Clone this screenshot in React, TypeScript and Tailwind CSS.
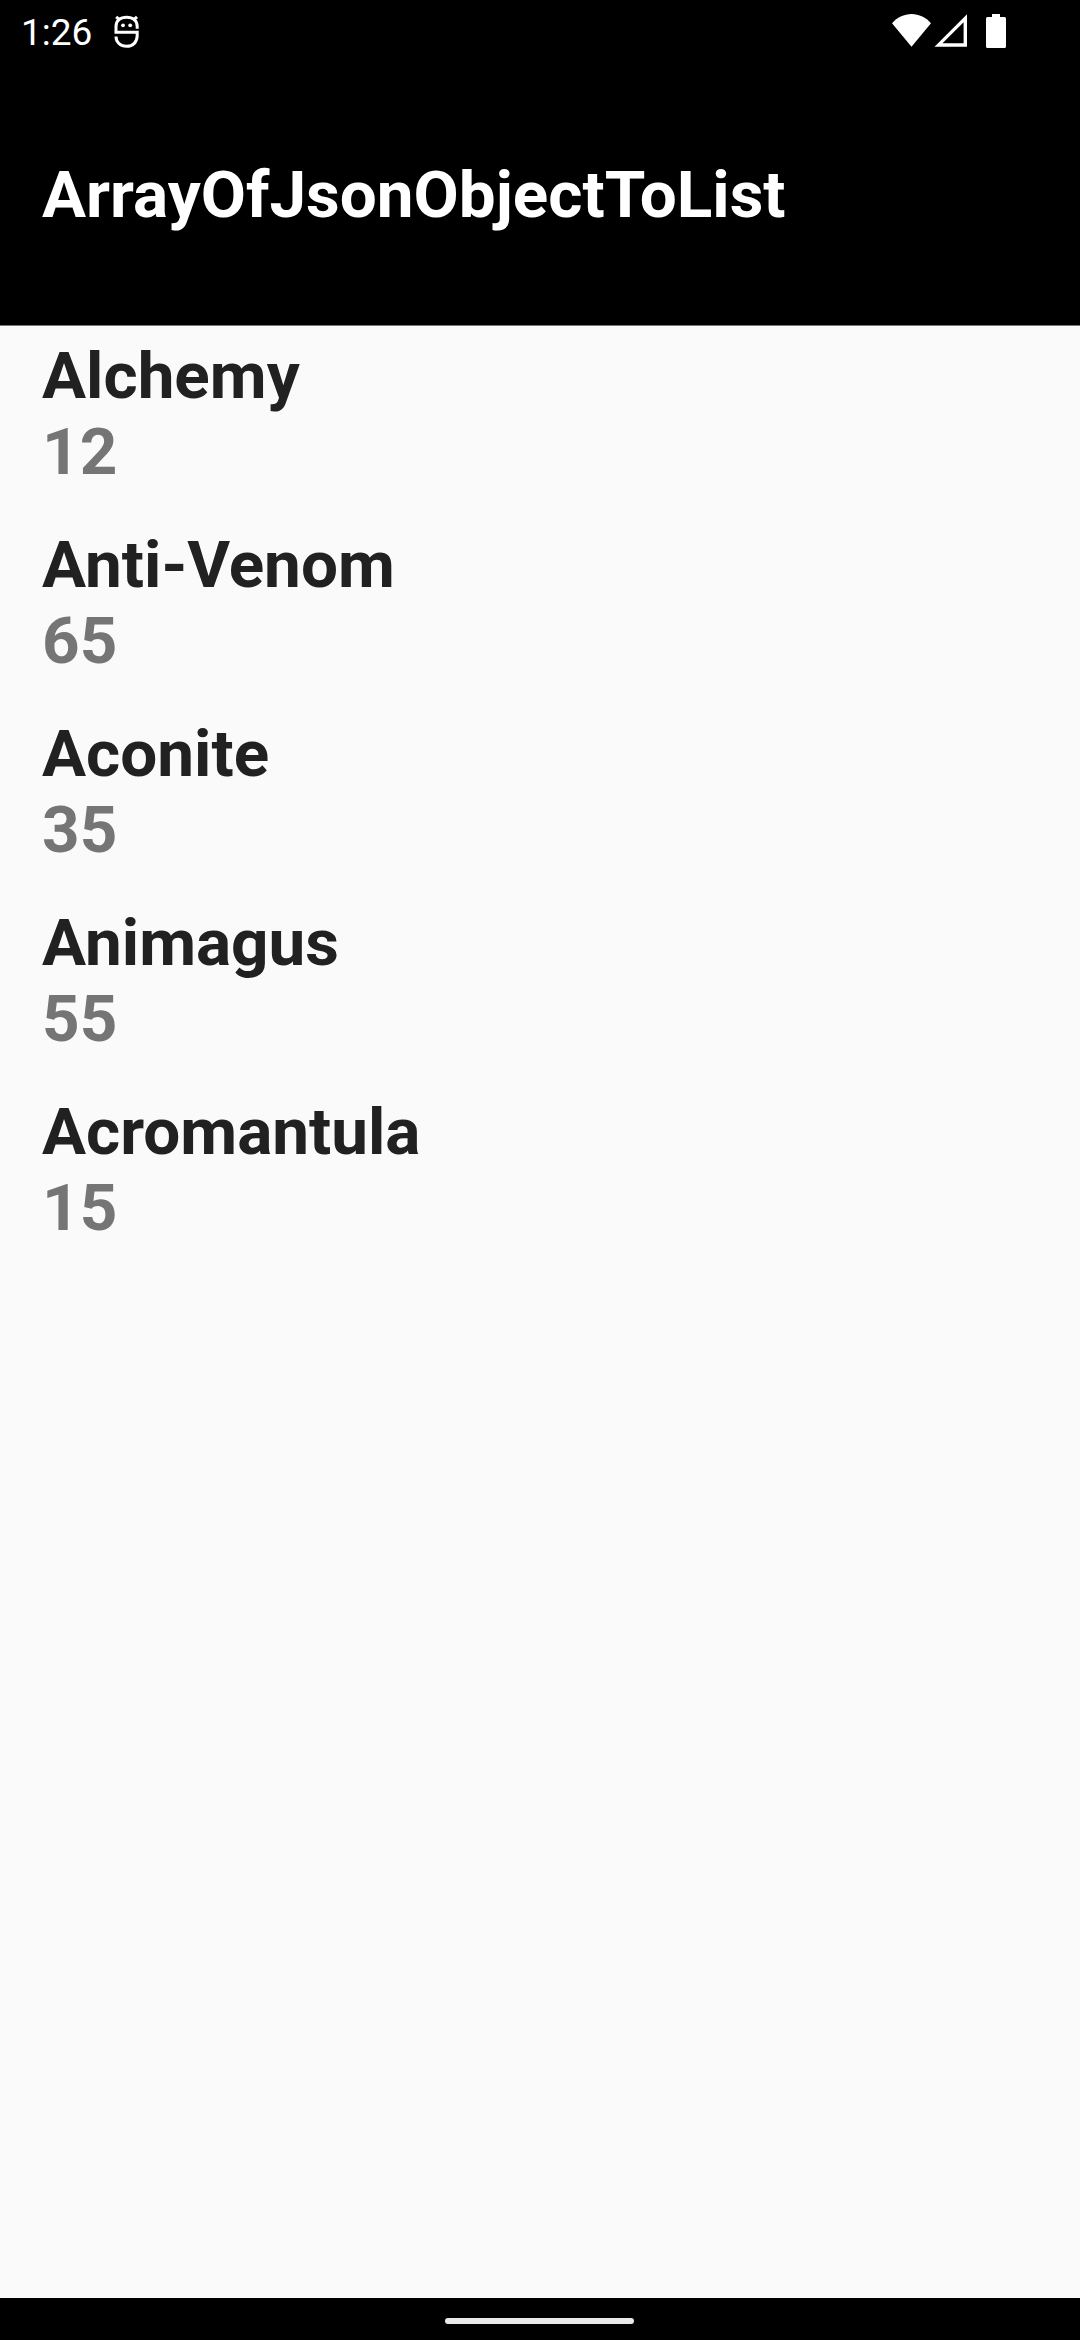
const items = [
  { name: "Alchemy", count: 12 },
  { name: "Anti-Venom", count: 65 },
  { name: "Aconite", count: 35 },
  { name: "Animagus", count: 55 },
  { name: "Acromantula", count: 15 },
];

function DebugIcon() {
  return (
    <svg className="ml-[21px] h-[36px] w-[27px]" viewBox="0 0 27 36" fill="none" stroke="white" strokeWidth="3">
      <path d="M24.2 15.8V13.500C24.2 7.500 20 4.300 13.600 4.300S3 7.500 3 13.500V19.200H24.200V22.500C24.200 29 20 33.300 13.600 33.300S3 29 3 23.500" />
      <path d="M3.200 3.800l4 3.600M24 3.800l-4 3.600" />
      <circle cx="10" cy="12.3" r="1.9" fill="white" stroke="none" />
      <circle cx="17.2" cy="12.3" r="1.9" fill="white" stroke="none" />
    </svg>
  );
}

function WifiIcon() {
  return (
    <svg className="h-[34px] w-[39px]" viewBox="0 0 39 34" fill="white">
      <path d="M0 10.2C5 4.500 12 1 19.500 1S34 4.500 39 10.200L19.500 33.700Z" />
    </svg>
  );
}

function SignalIcon() {
  return (
    <svg className="ml-[3px] h-[34px] w-[33px]" viewBox="0 0 33 34" fill="white">
      <path fillRule="evenodd" d="M0.500 33.700L33 1.300V33.700ZM8.500 30.200H29.600V9.200Z" />
    </svg>
  );
}

function BatteryIcon() {
  return (
    <svg className="ml-[19px] h-[35px] w-5" viewBox="0 0 20 35" fill="white">
      <path d="M6 1h8v3h4.500A1.500 1.500 0 0 1 20 5.500v28a1.500 1.500 0 0 1-1.500 1.500h-17A1.500 1.500 0 0 1 0 33.500v-28A1.500 1.500 0 0 1 1.500 4H6Z" />
    </svg>
  );
}

export default function App() {
  return (
    <div className="flex h-[2340px] w-[1080px] flex-col bg-[#fafafa] font-['Roboto',sans-serif]">
      <header className="h-[326px] border-b border-[#767676] bg-black text-white">
        <div className="flex h-16 items-start justify-between pl-[21px] pr-[74px] pt-[13px]">
          <div className="flex items-start">
            <span className="text-[37px] leading-[40px]">1:26</span>
            <DebugIcon />
          </div>
          <div className="flex items-start">
            <WifiIcon />
            <SignalIcon />
            <BatteryIcon />
          </div>
        </div>
        <h1 className="mt-[93px] pl-[42px] text-[65.625px] font-bold leading-[76px]">ArrayOfJsonObjectToList</h1>
      </header>
      <main className="flex-1 pt-[12px]">
        {items.map((item) => (
          <div key={item.name} className="h-[189px] pl-[42px] text-[65.625px] font-bold leading-[76px]">
            <div className="text-[#212121]">{item.name}</div>
            <div className="text-[#757575]">{item.count}</div>
          </div>
        ))}
      </main>
      <footer className="flex h-[42px] justify-center bg-black pt-5">
        <div className="mr-px h-[6px] w-[189px] rounded-full bg-[#ebe8ec]" />
      </footer>
    </div>
  );
}
